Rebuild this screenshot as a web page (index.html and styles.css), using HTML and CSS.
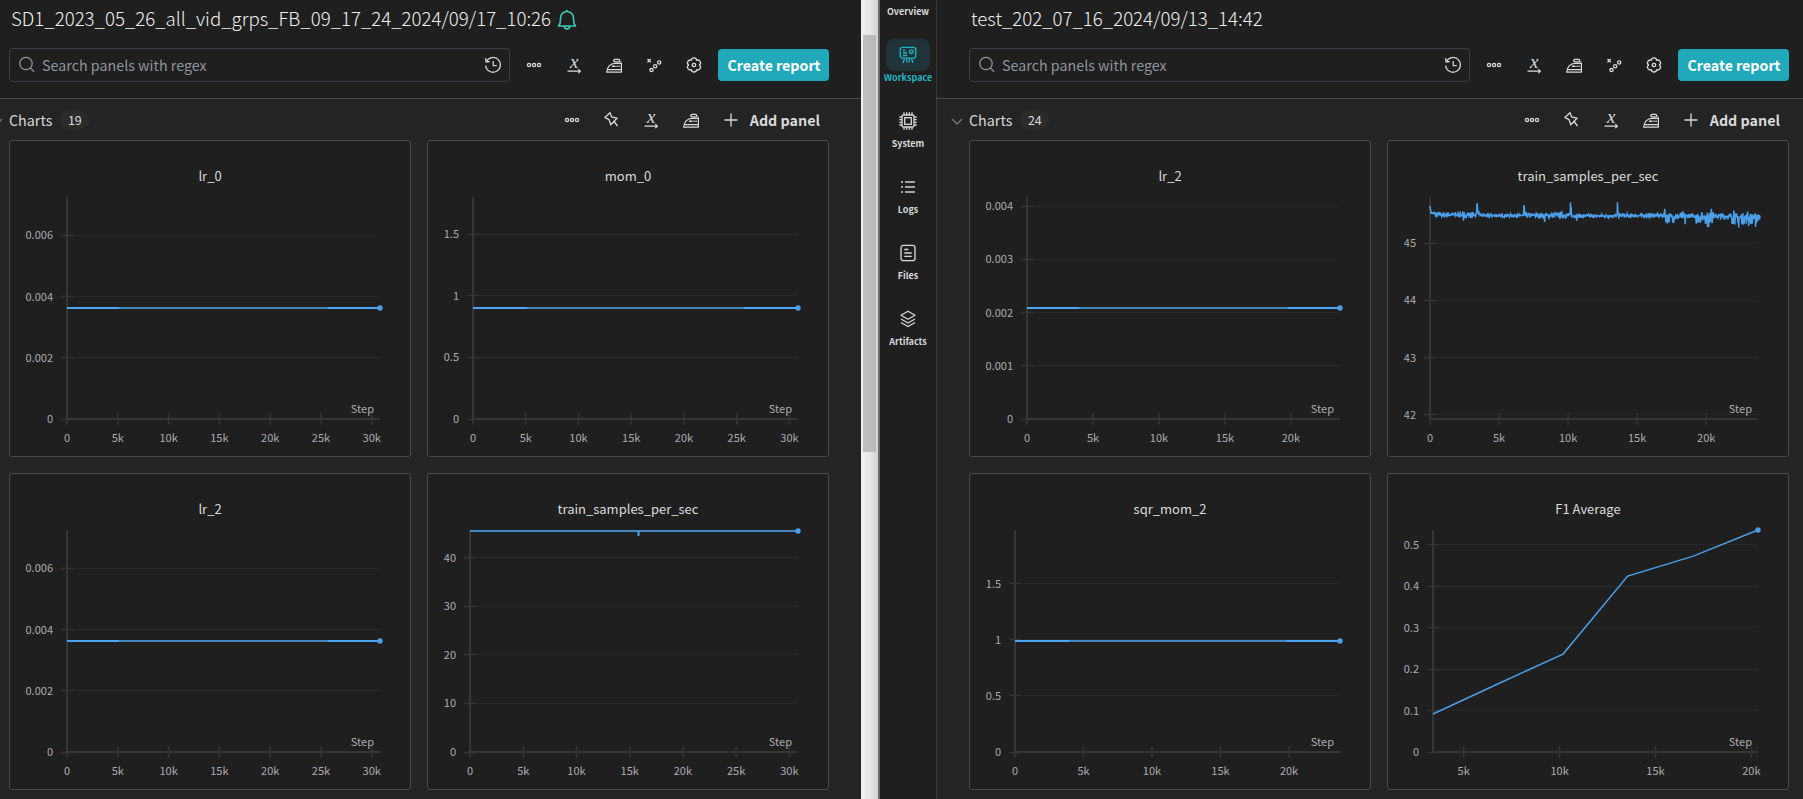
FILE: index.html
```html
<!DOCTYPE html>
<html lang="en">
<head>
  <meta charset="UTF-8" />
  <meta name="viewport" content="width=device-width, initial-scale=1.0" />
  <title>Workspace</title>
  <link rel="stylesheet" href="styles.css">
</head>
<body>
  <!-- icon set -->
  <svg class="defs">
    <symbol id="i-search" viewBox="0 0 18 18"><circle cx="8" cy="7.5" r="6.2"/><path d="M12.4 12l3.6 3.7"/></symbol>
    <symbol id="i-history" viewBox="0 0 18 18"><path d="M2.3 5.6A7.4 7.4 0 1 1 1.6 9.6M1.6 2.2l.5 3.8 3.7-.4M9.2 5v4.7h3.6"/></symbol>
    <symbol id="i-dots" viewBox="0 0 18 18"><circle cx="4" cy="9" r="1.6"/><circle cx="9" cy="9" r="1.6"/><circle cx="14" cy="9" r="1.6"/></symbol>
    <symbol id="i-x" viewBox="0 0 18 18"><text class="glyph-x" x="9.2" y="12.3">x</text><path d="M2.5 15.2h12.5M13.3 13.2l2 2-2 2" stroke-width="1.2"/></symbol>
    <symbol id="i-iron" viewBox="0 0 18 18"><path d="M1.6 16.2h14.8V7.3H10C5.3 7.3 2 11 1.6 16.2zM1.8 13.7h14.4M16 7.3V5.4" stroke-width="1.2" stroke-linejoin="round"/><rect x="8.7" y="3.4" width="6" height="2.4" rx="1.2"/><path d="M7 10.3h3.5M11.5 10.3h1.2M13.5 10.3h1.2" stroke-width="1.4"/></symbol>
    <symbol id="i-scatter" viewBox="0 0 18 18"><path d="M2.5 3l3.2 3.2M5.7 3L2.5 6.2"/><circle cx="14.2" cy="6.4" r="1.6"/><circle cx="10.2" cy="10.3" r="1.6"/><circle cx="6.5" cy="14.1" r="1.6"/></symbol>
    <symbol id="i-gear" viewBox="0 0 18 18"><circle cx="9" cy="9" r="1.7"/><path d="M14.4 9A2.72 2.72 0 0 1 11.7 13.68A2.72 2.72 0 0 1 6.3 13.68A2.72 2.72 0 0 1 3.6 9A2.72 2.72 0 0 1 6.3 4.32A2.72 2.72 0 0 1 11.7 4.32A2.72 2.72 0 0 1 14.4 9z" stroke-linejoin="round"/></symbol>
    <symbol id="i-pin" viewBox="0 0 18 18"><path d="M7 1.8l1.5 4 5.500 1.400-6.200 6.600L6 8.600 1.800 6.400zM11 10.500l3.600 4.500" stroke-linejoin="round"/></symbol>
    <symbol id="i-plus" viewBox="0 0 18 18"><path d="M9 2.5v13M2.5 9h13"/></symbol>
    <symbol id="i-caret" viewBox="0 0 12 8"><path d="M1 1l5 5 5-5"/></symbol>
    <symbol id="i-bell" viewBox="0 0 20 22"><path d="M10 .8v1.4M1.5 17c1.2-1.4 2-3 2-6V9a6.5 6.5 0 0 1 13 0v2c0 3 .8 4.600 2 6zM7.3 17.3c.4 3.4 5 3.4 5.4 0" stroke-linejoin="round"/></symbol>
    <symbol id="i-board" viewBox="0 0 18 18"><rect x="1.2" y="1.3" width="15.6" height="10.8" rx="2.4"/><circle cx="12.3" cy="5.7" r="1.8"/><path d="M4 4.5h2M4 7h4M4 9.5h4M5.5 12.5L4 17M7.8 12.5V16.5M10.2 12.5V16.5M12.5 12.5L14 17" stroke-width="1.3"/></symbol>
    <symbol id="i-chip" viewBox="0 0 18 18"><rect x="3" y="3" width="12" height="12" rx="1.5"/><rect x="5.7" y="5.7" width="6.6" height="6.6"/><path d="M5 3V.3M7.7 3V.3M10.4 3V.3M13 3V.3M5 17.7V15M7.7 17.7V15M10.4 17.7V15M13 17.7V15M3 5H.3M3 7.7H.3M3 10.4H.3M3 13H.3M17.7 5H15M17.7 7.7H15M17.7 10.4H15M17.7 13H15"/></symbol>
    <symbol id="i-list" viewBox="0 0 18 18"><path d="M2 4h2M6 4h10M2 9h2M6 9h10M2 14h2M6 14h10" stroke-width="1.9"/></symbol>
    <symbol id="i-file" viewBox="0 0 18 18"><rect x="2" y="1.3" width="14" height="15.4" rx="2.5"/><path d="M5.3 5.5h4M5.3 9h7.4M5.3 12.3h7.4"/></symbol>
    <symbol id="i-layers" viewBox="0 0 18 18"><path d="M9 1.2l7 4-7 4-7-4zM2 9l7 4 7-4M2 12.5l7 4 7-4" stroke-linejoin="round"/></symbol>
  </svg>

  <div class="app">
    <main class="pane pane-left">
      <header class="pane-header">
        <h1>SD1_2023_05_26_all_vid_grps_FB_09_17_24_2024/09/17_10:26 <svg class="bell"><use href="#i-bell"/></svg></h1>
        <div class="toolbar">
          <div class="search">
            <svg class="icon dim"><use href="#i-search"/></svg>
            <span>Search panels with regex</span>
            <svg class="icon"><use href="#i-history"/></svg>
          </div>
          <div class="tools">
            <svg class="icon"><use href="#i-dots"/></svg>
            <svg class="icon"><use href="#i-x"/></svg>
            <svg class="icon"><use href="#i-iron"/></svg>
            <svg class="icon"><use href="#i-scatter"/></svg>
            <svg class="icon"><use href="#i-gear"/></svg>
          </div>
          <button class="report">Create report</button>
        </div>
      </header>
      <section class="charts">
        <div class="section-bar">
          <svg class="caret"><use href="#i-caret"/></svg>
          <h2>Charts</h2>
          <span class="count">19</span>
          <div class="tools">
            <svg class="icon"><use href="#i-dots"/></svg>
            <svg class="icon"><use href="#i-pin"/></svg>
            <svg class="icon"><use href="#i-x"/></svg>
            <svg class="icon"><use href="#i-iron"/></svg>
          </div>
          <div class="add"><svg class="icon"><use href="#i-plus"/></svg>Add panel</div>
        </div>
        <div class="grid">
          <div class="card" data-chart="lr0"></div>
          <div class="card" data-chart="mom0"></div>
          <div class="card" data-chart="lr2"></div>
          <div class="card" data-chart="samples"></div>
        </div>
      </section>
    </main>

    <div class="scrollbar"><div class="thumb"></div></div>

    <nav class="sidebar">
      <div class="nav-item cut">Overview</div>
      <div class="nav-item active"><span class="nav-icon"><svg class="icon"><use href="#i-board"/></svg></span>Workspace</div>
      <div class="nav-item"><span class="nav-icon"><svg class="icon"><use href="#i-chip"/></svg></span>System</div>
      <div class="nav-item"><span class="nav-icon"><svg class="icon soft"><use href="#i-list"/></svg></span>Logs</div>
      <div class="nav-item"><span class="nav-icon"><svg class="icon"><use href="#i-file"/></svg></span>Files</div>
      <div class="nav-item"><span class="nav-icon"><svg class="icon"><use href="#i-layers"/></svg></span>Artifacts</div>
    </nav>

    <main class="pane pane-right">
      <header class="pane-header">
        <h1>test_202_07_16_2024/09/13_14:42</h1>
        <div class="toolbar">
          <div class="search">
            <svg class="icon dim"><use href="#i-search"/></svg>
            <span>Search panels with regex</span>
            <svg class="icon"><use href="#i-history"/></svg>
          </div>
          <div class="tools">
            <svg class="icon"><use href="#i-dots"/></svg>
            <svg class="icon"><use href="#i-x"/></svg>
            <svg class="icon"><use href="#i-iron"/></svg>
            <svg class="icon"><use href="#i-scatter"/></svg>
            <svg class="icon"><use href="#i-gear"/></svg>
          </div>
          <button class="report">Create report</button>
        </div>
      </header>
      <section class="charts">
        <div class="section-bar">
          <svg class="caret"><use href="#i-caret"/></svg>
          <h2>Charts</h2>
          <span class="count">24</span>
          <div class="tools">
            <svg class="icon"><use href="#i-dots"/></svg>
            <svg class="icon"><use href="#i-pin"/></svg>
            <svg class="icon"><use href="#i-x"/></svg>
            <svg class="icon"><use href="#i-iron"/></svg>
          </div>
          <div class="add"><svg class="icon"><use href="#i-plus"/></svg>Add panel</div>
        </div>
        <div class="grid">
          <div class="card" data-chart="lr2b"></div>
          <div class="card" data-chart="samplesb"></div>
          <div class="card" data-chart="sqr"></div>
          <div class="card" data-chart="f1"></div>
        </div>
      </section>
    </main>
  </div>

  <script src="charts.js"></script>
</body>
</html>
```
FILE: styles.css
```css
* {
  box-sizing: border-box;
}
body {
  margin: 0;
  background: #242424;
  color: #d8d9db;
  font-family: "Noto Sans CJK SC", "Noto Sans", sans-serif;
  font-size: 14.3px;
}
.defs {
  display: none;
}
.app {
  display: flex;
  width: 1803px;
  height: 799px;
  overflow: hidden;
}
svg {
  fill: none;
  stroke: currentColor;
  stroke-width: 1.3;
}
.icon {
  width: 18px;
  height: 18px;
  flex: none;
}
.glyph-x {
  fill: currentColor;
  stroke: none;
  font: italic 19px "Liberation Serif", serif;
  text-anchor: middle;
}

/* panes */
.pane {
  overflow: hidden;
  background: #242424;
}
.pane-left {
  width: 861px;
}
.pane-right {
  width: 867px;
  border-left: 1px solid #3a3a3e;
}
.pane-header {
  height: 99px;
  padding-left: 9px;
  background: #1f1f1f;
  border-bottom: 1px solid #484848;
}
.charts {
  padding-left: 9px;
}
.pane-right .pane-header,
.pane-right .charts {
  padding-left: 32px;
}
h1 {
  display: flex;
  align-items: center;
  height: 34px;
  margin: 0 0 14px;
  padding-left: 2px;
  font-size: 18.67px;
  font-weight: 300;
  white-space: nowrap;
  color: #f0f0f0;
}
.bell {
  width: 20px;
  height: 22px;
  margin-left: 6px;
  margin-top: 6px;
  color: #3fc9b5;
  stroke-width: 1.6;
}
.toolbar {
  display: flex;
  align-items: center;
  width: 820px;
}
.search {
  display: flex;
  align-items: center;
  width: 501px;
  height: 34px;
  padding: 0 7px 0 8px;
  border: 1px solid #3d3e44;
  border-radius: 4px;
  color: #8e949e;
}
.search span {
  flex: 1;
  margin-left: 6px;
  padding-bottom: 1px;
}
.search .icon:last-child {
  color: #cfcfcf;
}
.search .dim {
  color: #8e949e;
}
.tools {
  display: flex;
  gap: 22px;
}
.toolbar .tools {
  margin-left: 15px;
}
.report {
  width: 111px;
  height: 32px;
  margin: 0 0 0 auto;
  padding: 0 0 0 1px;
  border: 0;
  border-radius: 4px;
  background: #20a9ba;
  color: #fff;
  font: bold 14.2px "Noto Sans CJK SC", sans-serif;
}

/* section title row */
.section-bar {
  display: flex;
  align-items: center;
  width: 820px;
  height: 41px;
}
.caret {
  width: 12px;
  height: 8px;
  margin: 4px 6px 0 -18px;
  color: #77787a;
}
h2 {
  margin: 0;
  font-size: 14.3px;
  font-weight: 400;
}
.count {
  width: 29px;
  height: 20px;
  margin-left: 8px;
  border-radius: 10px;
  background: #2b2b2b;
  font-size: 12.5px;
  line-height: 20px;
  text-align: center;
}
.section-bar .tools {
  gap: 21.5px;
  margin-left: auto;
}
.add {
  display: flex;
  align-items: center;
  gap: 10px;
  margin: 0 9px 0 22px;
  font-weight: 700;
}
.grid {
  display: grid;
  grid-template-columns: 402px 402px;
  grid-auto-rows: 317px;
  gap: 16px;
}
.card {
  border: 1px solid #4a4a4a;
  border-radius: 3px;
  background: #1f1f1f;
}
.card svg {
  display: block;
  stroke: none;
}

/* window edge between the two panes */
.scrollbar {
  width: 19px;
  padding: 35px 2px 0;
  border-right: 2px solid #6a6a6a;
  background: linear-gradient(90deg, #f2f2f2, #e4e4e4 60%, #d2d2d2);
}
.thumb {
  width: 13px;
  height: 417px;
  background: linear-gradient(90deg, #c0c0c0, #b8b8b8);
}
.sidebar {
  width: 56px;
  background: #1f1f1f;
}
.nav-item {
  display: flex;
  flex-direction: column;
  align-items: center;
  height: 66px;
  font-size: 9px;
  font-weight: 700;
  line-height: 14px;
}
.nav-item.cut {
  height: 39px;
  padding-top: 5px;
}
.nav-icon {
  display: flex;
  align-items: center;
  justify-content: center;
  width: 44px;
  height: 32px;
  border-radius: 8px;
}
.nav-item.active {
  color: #20b3c0;
}
.active .nav-icon {
  background: #20343a;
}
.soft {
  color: #a5a5a5;
}

/* charts */
.chart-title {
  font-size: 13px;
  fill: #dcdcdc;
  text-anchor: middle;
}
.label {
  font-size: 11px;
  fill: #acacb0;
}
.end {
  text-anchor: end;
}
.mid {
  text-anchor: middle;
}
.gridline {
  stroke: #282828;
  stroke-width: 1;
}
.tick {
  stroke: #343435;
  stroke-width: 1.5;
}
.axis {
  stroke: #363637;
  stroke-width: 2;
}
.line {
  fill: none;
  stroke: #4a9fe8;
  stroke-width: 1.5;
}
.flat {
  stroke: #4ba5f0;
  stroke-width: 2;
}
.flat-mid {
  stroke: #4387c0;
  stroke-width: 2;
}
.dot {
  fill: #4a9fe8;
}
```
FILE: charts.js
```js
// plot area inside a card
const TOP = 57, BOTTOM = 279, RIGHT = 371;

const charts = {
  lr0: { title: 'lr_0', left: 58, x: [0, 30810], y: [0, 0.007256], yt: [0, 0.002, 0.004, 0.006], flat: 0.003628, ends: 52 },
  mom0: { title: 'mom_0', left: 46, x: [0, 30810], y: [0, 1.8], yt: [0, 0.5, 1, 1.5], flat: 0.9, ends: 54 },
  lr2: { title: 'lr_2', left: 58, x: [0, 30810], y: [0, 0.007256], yt: [0, 0.002, 0.004, 0.006], flat: 0.003628, ends: 52 },
  samples: { title: 'train_samples_per_sec', left: 43, x: [0, 30810], y: [0, 45.7], yt: [0, 10, 20, 30, 40], flat: 45.5, ends: 0, dip: 15830 },
  lr2b: { title: 'lr_2', left: 58, x: [0, 23720], y: [0, 0.004175], yt: [0, 0.001, 0.002, 0.003, 0.004], flat: 0.0020875, ends: 52 },
  samplesb: { title: 'train_samples_per_sec', left: 43, x: [0, 23750], y: [41.93, 45.804], yt: [42, 43, 44, 45], points: noise(), dense: true },
  sqr: { title: 'sqr_mom_2', left: 46, x: [0, 23720], y: [0, 1.98], yt: [0, 0.5, 1, 1.5], flat: 0.99, ends: 54 },
  f1: { title: 'F1 Average', left: 46, x: [3400, 20345], y: [0, 0.535], yt: [0, 0.1, 0.2, 0.3, 0.4, 0.5],
    points: [[3400, 0.0916], [6800, 0.1646], [10180, 0.236], [13550, 0.424], [16970, 0.472], [20345, 0.535]] }
};

// throughput samples: [until step, mean, up, down] per stretch, plus single peaks
function noise() {
  const parts = [
    [350, 45.52, .03, .03], [3330, 45.495, .055, .06], [3600, 45.51, .03, .02], [6750, 45.48, .03, .03],
    [10150, 45.485, .05, .06], [13550, 45.475, .03, .04], [16900, 45.48, .04, .04], [18500, 45.465, .08, .11],
    [19200, 45.475, .04, .04], [20500, 45.46, .09, .13], [21800, 45.47, .05, .06], [23800, 45.45, .08, .13]
  ];
  const peaks = [[0, 45.65], [25, 45.6], [50, 45.57], [2425, 45.39], [3400, 45.68], [3425, 45.68], [3450, 45.56],
    [3475, 45.55], [3500, 45.53], [6800, 45.66], [6825, 45.64], [6850, 45.54], [8300, 45.37], [10175, 45.71],
    [10200, 45.58], [10225, 45.62], [10625, 45.39], [13575, 45.71], [13600, 45.56], [13625, 45.53], [17000, 45.6], [17200, 45.34],
    [18475, 45.33], [20100, 45.28], [20175, 45.28], [20375, 45.6], [22000, 45.57], [22350, 45.27], [23000, 45.55], [23075, 45.3], [23575, 45.28]];
  const special = new Map(peaks);
  let seed = 7;
  const rnd = () => (seed = seed * 16807 % 2147483647) / 2147483647;
  const out = [];
  for (let s = 0; s <= 23750; s += 25) {
    const [, mean, up, down] = parts.find(p => s <= p[0]);
    const r = rnd() * 2 - 1;
    const v = mean + (r > 0 ? r * r * up : -r * r * down);
    out.push([s, special.get(s) ?? v]);
  }
  return out;
}

function draw(card) {
  const c = charts[card.dataset.chart];
  const X = v => c.left + (v - c.x[0]) / (c.x[1] - c.x[0]) * (RIGHT - c.left);
  const Y = v => BOTTOM - (v - c.y[0]) / (c.y[1] - c.y[0]) * (BOTTOM - TOP);
  const line = (cls, x1, y1, x2, y2) => `<line class="${cls}" x1="${x1}" y1="${y1}" x2="${x2}" y2="${y2}"/>`;
  let s = `<text class="chart-title" x="201" y="41">${c.title}</text>`;

  c.yt.forEach(v => {
    const y = Math.round(Y(v) - 0.5) + 0.5;
    if (v) s += line('gridline', c.left, y, RIGHT, y);
    s += line('tick', c.left - 6, y, c.left + 6, y);
    s += `<text class="label end" x="${c.left - 14}" y="${Y(v) + 4}">${v}</text>`;
  });
  for (let v = Math.ceil(c.x[0] / 5000) * 5000; v <= c.x[1]; v += 5000) {
    s += line('tick', X(v), BOTTOM - 6, X(v), BOTTOM + 6);
    s += `<text class="label mid" x="${X(v)}" y="302">${v ? v / 1000 + 'k' : 0}</text>`;
  }
  s += line('axis', c.left, TOP, c.left, BOTTOM + 1) + line('axis', c.left, BOTTOM, RIGHT, BOTTOM);
  s += '<text class="label end" x="365" y="273">Step</text>';

  let last;
  if (c.flat) {
    last = Math.round(Y(c.flat));
    s += line('flat', c.left, last, RIGHT, last);
    s += line('flat-mid', c.left + c.ends, last, RIGHT - c.ends, last);
    if (c.dip) s += line('flat', X(c.dip), last, X(c.dip), last + 5);
  } else {
    last = Y(c.points[c.points.length - 1][1]);
    s += `<polyline class="line" points="${c.points.map(p => X(p[0]).toFixed(2) + ',' + Y(p[1]).toFixed(2)).join(' ')}"/>`;
  }
  s += `<circle class="dot" cx="${RIGHT}" cy="${last}" r="2.7"/>`;
  card.innerHTML = `<svg width="400" height="315" viewBox="1 1 400 315">${s}</svg>`;
}

document.querySelectorAll('.card').forEach(draw);
```
